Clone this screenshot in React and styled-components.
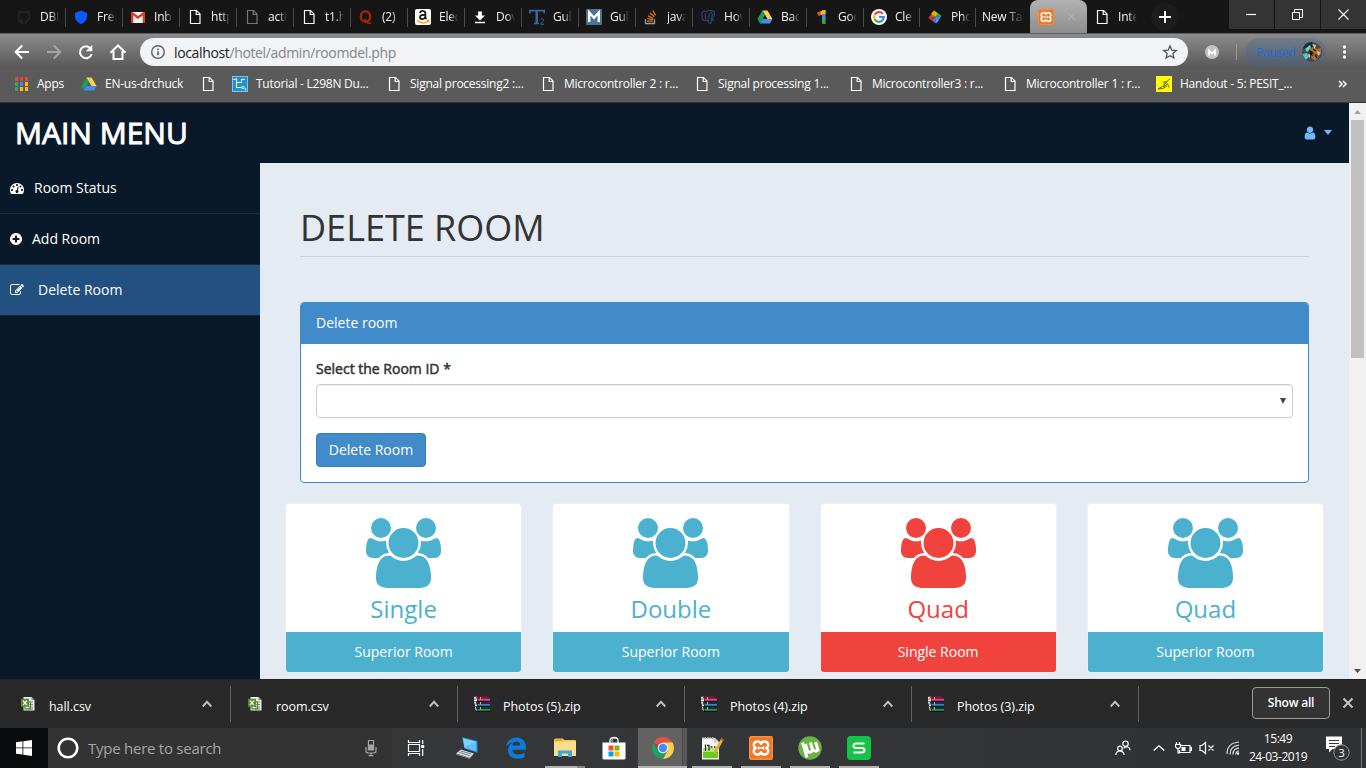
import React from "react";
import styled, { createGlobalStyle, css } from "styled-components";

const GlobalStyle = createGlobalStyle`
  *, *::before, *::after { box-sizing: border-box; }
  html, body { margin: 0; padding: 0; }
  body { width: 1366px; height: 768px; overflow: hidden; font-family: "Open Sans", sans-serif; background: #09192a; }
  svg { display: block; flex: none; }
`;

const Screen = styled.div`
  width: 1366px;
  height: 768px;
  display: flex;
  flex-direction: column;
  overflow: hidden;
`;

/* ---------- browser tabs ---------- */

const TabStrip = styled.div`
  height: 33px;
  flex: none;
  display: flex;
  background: #161616;
  padding-left: 9px;
`;

const TabBox = styled.div`
  width: ${(p) => p.$width}px;
  height: 33px;
  flex: none;
  display: flex;
  align-items: center;
  padding-left: ${(p) => p.$pad}px;
  overflow: hidden;
  background: linear-gradient(to right, transparent calc(100% - 1px), #4b4b4b 0) 0 8px / 100% 19px no-repeat;
  ${(p) => p.$plain && css`background: none;`}
  ${(p) =>
    p.$active &&
    css`
      background: linear-gradient(#b2b2b2, #8d8d8d);
      border-radius: 8px 8px 0 0;
      justify-content: space-between;
      padding-right: 11px;
    `}
`;

const TabLabel = styled.span`
  width: ${(p) => p.$width || 19}px;
  margin-left: ${(p) => p.$gap ?? 8}px;
  overflow: hidden;
  white-space: nowrap;
  font-size: 12px;
  line-height: 18px;
  letter-spacing: -0.2px;
  color: #f2f2f2;
  mask-image: linear-gradient(to right, #000 55%, transparent 100%);
`;

const NewTabButton = styled.div`
  width: 28px;
  height: 28px;
  margin: 3px 0 0 7px;
  border-radius: 50%;
  background: #1c1c1c;
  display: grid;
  place-items: center;
`;

const WindowControls = styled.div`
  margin-left: auto;
  display: flex;
  gap: 1px;
  height: 29px;
`;

const ControlButton = styled.div`
  width: 45px;
  height: 29px;
  padding-right: 1px;
  background: #343434;
  display: grid;
  place-items: center;
`;

/* ---------- toolbar ---------- */

const BrowserHead = styled.div`
  height: 70px;
  flex: none;
  background: linear-gradient(#8b8b8b 0, #5a5a5a 33px);
  border-top: 1px solid #5e5e5e;
  border-bottom: 1px solid #343434;
`;

const Toolbar = styled.div`
  height: 36px;
  display: flex;
  align-items: center;
  padding-left: 12px;
`;

const NavButton = styled.div`
  width: 32px;
  height: 20px;
  flex: none;
`;

const AddressBar = styled.div`
  width: 1048px;
  height: 28px;
  border-radius: 14px;
  background: #f1f3f4;
  display: flex;
  align-items: center;
  padding: 0 10px;
  font-size: 14px;
  letter-spacing: -0.36px;
  color: #80868b;
`;

const Host = styled.span`
  color: #202124;
  margin-left: 8px;
`;

const UrlPath = styled.span`
  flex: 1;
`;

const ExtensionBadge = styled.div`
  width: 14px;
  height: 14px;
  margin-left: 17px;
  border-radius: 50%;
  background: #c3c3c3;
  display: grid;
  place-items: center;
`;

const ToolbarDivider = styled.div`
  width: 1px;
  height: 16px;
  margin-left: 17px;
  background: #999;
`;

const ProfilePill = styled.div`
  width: 80px;
  height: 28px;
  margin-left: 9px;
  border-radius: 14px;
  background: rgba(66, 104, 150, 0.32);
  display: flex;
  align-items: center;
  justify-content: space-between;
  padding: 0 4px 0 10px;
  font-size: 12px;
  letter-spacing: -0.35px;
  color: #1a6be0;
`;

const BookmarkBar = styled.div`
  height: 28px;
  display: flex;
  align-items: center;
  padding-left: 13px;
`;

const BookmarkItem = styled.div`
  width: ${(p) => p.$width}px;
  flex: none;
  display: flex;
  align-items: center;
  gap: 8px;
  white-space: nowrap;
  font-size: 12px;
  line-height: 16px;
  letter-spacing: -0.24px;
  color: #fff;
`;

const IconBox = styled.span`
  width: 16px;
  height: 16px;
  flex: none;
  display: grid;
  place-items: center;
`;

/* ---------- web page ---------- */

const Viewport = styled.div`
  height: 576px;
  flex: none;
  display: flex;
`;

const Page = styled.div`
  width: 1349px;
  height: 576px;
  overflow: hidden;
  background: #09192a;
`;

const TopNav = styled.header`
  height: 60px;
  display: flex;
  align-items: center;
  justify-content: space-between;
  padding: 0 17px 0 15px;
`;

const Brand = styled.div`
  margin-top: -1px;
  font-size: 30px;
  letter-spacing: 0;
  color: #fff;
  -webkit-text-stroke: 1px #fff;
`;

const UserMenu = styled.div`
  display: flex;
  align-items: center;
  gap: 8px;
  margin-top: -2px;
  color: #6fbafc;
`;

const Caret = styled.span`
  border: 4.500px solid transparent;
  border-top-color: currentColor;
  border-top-width: 5px;
  border-bottom: 0;
`;

const PageBody = styled.div`
  display: flex;
`;

const SideMenu = styled.nav`
  width: 260px;
  flex: none;
`;

const MenuItem = styled.div`
  height: 51px;
  display: flex;
  align-items: center;
  gap: ${(p) => p.$gap}px;
  padding: 0 10px 1px;
  border-bottom: 1px solid #1a2a3b;
  background: ${(p) => (p.$active ? "#225081" : "transparent")};
  color: #fff;
  font-size: 14px;
`;

const Content = styled.main`
  width: 1089px;
  height: 516px;
  overflow: hidden;
  background: #e4ebf3;
  padding: 0 40px;
`;

const PageTitle = styled.h1`
  margin: 0 0 45px;
  height: 94px;
  padding-top: 40px;
  border-bottom: 1px solid #c8d1df;
  font-size: 36px;
  font-weight: 400;
  line-height: 50px;
  letter-spacing: 0;
  color: #333;
`;

const Panel = styled.section`
  height: 181px;
  border: 1px solid #428bca;
  border-radius: 4px;
  background: #fff;
  overflow: hidden;
`;

const PanelHeading = styled.div`
  height: 41px;
  padding-left: 15px;
  background: #428bca;
  color: #fff;
  font-size: 14px;
  line-height: 40px;
`;

const PanelBody = styled.div`
  padding: 15px;
`;

const FieldLabel = styled.div`
  height: 25px;
  font-size: 14px;
  line-height: 20px;
  color: #333;
  -webkit-text-stroke: 0.5px #333;
`;

const SelectField = styled.div`
  height: 34px;
  border: 1px solid #ccc;
  border-radius: 4px;
  box-shadow: inset 0 1px 1px rgba(0, 0, 0, 0.075);
  display: flex;
  align-items: center;
  justify-content: flex-end;
  padding-right: 6px;
`;

const DeleteButton = styled.div`
  width: 110px;
  height: 34px;
  margin-top: 15px;
  border: 1px solid #357ebd;
  border-radius: 4px;
  background: #428bca;
  color: #fff;
  font-size: 14px;
  line-height: 32px;
  text-align: center;
`;

const CardGrid = styled.div`
  display: grid;
  grid-template-columns: repeat(4, 1fr);
  gap: 30px;
  margin: 20px -15px 0;
`;

const Card = styled.article`
  height: 170px;
  border: 1px solid #eceef1;
  border-radius: 4px;
  background: #fff;
  color: ${(p) => p.$color};
  overflow: hidden;
  text-align: center;
`;

const CardTop = styled.div`
  height: 128px;
  padding-top: 14px;
  display: flex;
  flex-direction: column;
  align-items: center;
`;

const CardTitle = styled.div`
  margin-top: 5px;
  font-size: 24px;
  font-weight: 400;
  line-height: 32px;
`;

const CardFooter = styled.div`
  height: 40px;
  background: ${(p) => p.$color};
  color: #fff;
  font-size: 14px;
  line-height: 40px;
`;

const Scrollbar = styled.div`
  width: 17px;
  background: #f1f1f1;
  display: flex;
  flex-direction: column;
  align-items: center;
  justify-content: space-between;
`;

const ScrollTrack = styled.div`
  width: 13px;
  flex: 1;
`;

const ScrollThumb = styled.div`
  height: 238px;
  background: #c1c1c1;
`;

const ScrollArrow = styled.div`
  height: 17px;
  display: grid;
  place-items: center;
`;

/* ---------- downloads shelf ---------- */

const Shelf = styled.div`
  height: 49px;
  flex: none;
  background: #292929;
  border-top: 1px solid #202224;
  display: flex;
  align-items: center;
  padding: 0 12px 0 4px;
`;

const DownloadItem = styled.div`
  width: 227px;
  height: 36px;
  flex: none;
  display: flex;
  align-items: center;
  padding: 0 18px 0 16px;
  border-right: 1px solid #5f5f5f;
  color: #fff;
`;

const FileName = styled.span`
  flex: 1;
  margin: 4px 0 0 13px;
  font-size: 12.500px;
  letter-spacing: -0.05px;
`;

const ShowAll = styled.div`
  width: 78px;
  height: 32px;
  margin: -2px 0 0 auto;
  border: 1px solid #9a9a9a;
  border-radius: 4px;
  background: #333;
  color: #fff;
  font-size: 12px;
  font-weight: 600;
  letter-spacing: -0.2px;
  line-height: 29px;
  text-align: center;
`;

const ShelfClose = styled.div`
  margin: -2px 0 0 12px;
`;

/* ---------- taskbar ---------- */

const Taskbar = styled.div`
  height: 40px;
  flex: none;
  display: flex;
  background: linear-gradient(to right, #383838, #343537 55%, #2f3133);
`;

const StartButton = styled.div`
  width: 48px;
  background: #090b0c;
  display: grid;
  place-items: center;
`;

const SearchBox = styled.div`
  width: 344px;
  background: #333;
  display: flex;
  align-items: center;
  padding: 0 13px 0 9px;
  color: #a6a6a6;
  font-size: 15px;
  letter-spacing: -0.25px;
`;

const SearchHint = styled.span`
  flex: 1;
  margin-left: 9px;
`;

const TaskView = styled.div`
  width: 50px;
  padding-left: 15px;
  display: flex;
  align-items: center;
`;

const AppSlot = styled.div`
  width: 49px;
  height: 40px;
  flex: none;
  display: flex;
  flex-direction: column;
  align-items: center;
  background: ${(p) => (p.$active ? "linear-gradient(to right, #626262 44px, #454545 44px, #454545 45px, #585858 45px)" : "none")};
`;

const AppIcon = styled.div`
  height: 38px;
  display: grid;
  place-items: center;
  padding: 2px 0 0 1px;
`;

const RunningBar = styled.div`
  width: ${(p) => p.$width}px;
  height: 2px;
  background: ${(p) => (p.$stack ? "linear-gradient(to right, #b2b2b2 32px, #888 32px)" : "#b2b2b2")};
`;

const Tray = styled.div`
  margin-left: auto;
  display: flex;
  align-items: center;
`;

const TrayIcon = styled.div`
  margin-left: ${(p) => p.$gap}px;
`;

const Clock = styled.div`
  width: 66px;
  margin-left: 5px;
  color: #fff;
  font-size: 12px;
  line-height: 18px;
  letter-spacing: -0.45px;
  text-align: center;
`;

const DesktopEdge = styled.div`
  width: 5px;
  height: 40px;
  margin-left: 10px;
  border-left: 1px solid #777;
`;

/* ---------- icons ---------- */

const DocIcon = ({ color = "#fff" }) => (
  <svg width="16" height="16" viewBox="0 0 16 16" fill="none" stroke={color} strokeWidth="1.200">
    <path d="M3.500 1.500h6l3.500 3.500v9.500h-9.500z" />
    <path d="M9.200 1.500v4H13" />
  </svg>
);

const DriveIcon = () => (
  <svg width="16" height="16" viewBox="0 0 16 16">
    <path d="M5.500 1.500 8 6 3 14.500.5 10z" fill="#18a05e" />
    <path d="M5.500 1.500h5l5 8.500h-5z" fill="#ffcf48" />
    <path d="M5.600 10h10L13 14.500H3z" fill="#4688f4" />
  </svg>
);

const XamppIcon = ({ size = 16 }) => (
  <svg width={size} height={size} viewBox="0 0 16 16">
    <rect width="16" height="16" rx="1.500" fill="#f37623" />
    <rect x=".5" y=".5" width="15" height="15" rx="1" fill="none" stroke="#fa9b58" strokeWidth=".6" />
    <path
      d="M8 5.200C7.400 3.600 5.800 3.600 4.800 3.800 3.200 4.200 3 5.800 3.400 6.800 3.700 7.500 4.200 7.800 4.500 8 4.200 8.200 3.700 8.500 3.400 9.200 3 10.200 3.200 11.800 4.800 12.200 5.800 12.400 7.400 12.400 8 10.800 8.600 12.400 10.200 12.400 11.200 12.200 12.800 11.800 13 10.200 12.600 9.200 12.300 8.500 11.800 8.200 11.500 8 11.800 7.800 12.300 7.500 12.600 6.800 13 5.800 12.800 4.200 11.200 3.800 10.200 3.600 8.600 3.600 8 5.200z"
      fill="none"
      stroke="#fff"
      strokeWidth="1.700"
      strokeLinejoin="round"
    />
    <path d="M6.300 6.800v2.400M9.700 6.800v2.400M6.300 8h3.400" fill="none" stroke="#fff" strokeWidth=".9" />
  </svg>
);

const TabIcons = {
  github: (
    <svg width="16" height="16" viewBox="0 0 16 16" fill="none" stroke="#252525" strokeWidth="1.600">
      <path d="M6 15v-3C2 11 1.500 6.500 3.500 5L3.300 2.200 6 3.200h4l2.700-1-.2 2.800c2 1.500 1.500 6-2.500 7v3M6 13c-2 .5-2.500-1-4-1.500" />
    </svg>
  ),
  shield: (
    <svg width="16" height="16" viewBox="0 0 16 16">
      <path d="M8 1.500 14 4v3.500c0 3.500-2.600 6-6 7.500-3.400-1.500-6-4-6-7.500V4z" fill="#0a5bff" />
    </svg>
  ),
  gmail: (
    <svg width="16" height="16" viewBox="0 0 16 16">
      <path d="M1 3h14v11H1z" fill="#f2f2f2" />
      <path d="M1 3v11h2.300V6.500L8 10l4.700-3.500V14H15V3h-1.500L8 7 2.500 3z" fill="#d9392e" />
    </svg>
  ),
  quora: (
    <svg width="16" height="16" viewBox="0 0 16 16" fill="none" stroke="#a82400">
      <ellipse cx="7.500" cy="7.500" rx="4.700" ry="5.200" strokeWidth="2.300" />
      <path d="M6 10.500c2.800-.5 3 4.300 5 4 1.200 0 1.500-.8 1.600-1.600" strokeWidth="1.700" />
    </svg>
  ),
  amazon: (
    <svg width="16" height="16" viewBox="0 0 16 16">
      <rect width="16" height="16" rx="2" fill="#fff" />
      <path d="M5 4.200c.4-3 5.400-3 5.400.2v4.400l1 1.200M10.300 5.600C6.500 5.600 5 6.400 5 8.200c0 2.400 4 2.700 5.300-.2" fill="none" stroke="#111" strokeWidth="1.700" />
      <path d="M2 11.500c4 3 8.500 3 11.500.4M11.500 11.300l2.300-.1-.5 2.300" fill="none" stroke="#f90" strokeWidth="1.200" />
    </svg>
  ),
  download: (
    <svg width="16" height="16" viewBox="0 0 16 16" fill="#fff">
      <path d="M6 2.500h4v4h3L8 11.500 3 6.500h3zM3 12.700h10v1.500H3z" />
    </svg>
  ),
  tutorials: (
    <svg width="16" height="16" viewBox="0 0 16 16" fill="none" stroke="#336ba3">
      <path d="M.8 4.500V1.700h14.400v2.800M5 14.500h5" strokeWidth="1.700" />
      <path d="M7.700 2v12.500" strokeWidth="2.400" />
      <path d="M11.700 10.500c1-1.300 3-.7 3 .7s-3 2.500-3 4h3.500" strokeWidth="1" />
    </svg>
  ),
  mdn: (
    <svg width="16" height="16" viewBox="0 0 16 16">
      <rect width="16" height="16" rx="1" fill="#4f7193" />
      <path d="M3.200 13V3.500L8 8.800l4.800-5.300V13" fill="none" stroke="#fff" strokeWidth="2.400" />
    </svg>
  ),
  stack: (
    <svg width="16" height="16" viewBox="0 0 16 16" fill="none" strokeWidth="1.300">
      <path d="M2.500 10v4.500h9V10" stroke="#9a9a9a" />
      <path d="M4.200 12.200h5.600M4.300 9.700l5.600 1M5 6.900l5.200 2.400M7 4l4.400 3.700M9.700 1.500l3 4.800" stroke="#e3711e" />
    </svg>
  ),
  postgres: (
    <svg width="16" height="16" viewBox="0 0 16 16" fill="none" stroke="#2c466e" strokeWidth="1.200">
      <path d="M4.700 11.500C2.500 12.500 1 5.500 2.300 3.200c1-1.600 3.300-1.700 4.700-.7M6 4c-1.500 2 0 4-.5 6s1.500 2 2.500.8M7 2.500c2.500-1.800 7.500-1 7.500 2S12 9.500 11.200 11M8.200 10.500c.3 2 .3 4 1.700 4s1.600-1.800 1.300-3.700M9 4c0 3 .5 4-.6 6M10.500 3.500c1.500 0 2 1.500 1.500 3.500s-1 3-.3 3.800M11 11.200h3.200" />
    </svg>
  ),
  one: (
    <svg width="16" height="16" viewBox="0 0 16 16">
      <path d="M3.500 3.500 9 1.500h2.500V6H8L4.500 6.500z" fill="#fbbc04" />
      <path d="M3 4.200 6 2.600 7.200 5.500 4.800 6.700z" fill="#ea4335" />
      <path d="M8 5h3.500v5H8z" fill="#4285f4" />
      <path d="M8 9h3.500v6H9L8 14z" fill="#34a853" />
      <path d="m8 1.500 3.500-.5v3L8 5z" fill="#fbbc04" />
    </svg>
  ),
  google: (
    <svg width="16" height="16" viewBox="0 0 16 16">
      <circle cx="8" cy="8" r="8" fill="#fff" />
      <g fill="none" strokeWidth="2.200">
        <path d="M11.800 4.700A4.900 4.900 0 0 0 3.800 5.600" stroke="#ea4335" />
        <path d="M3.700 5.600a4.900 4.900 0 0 0 0 4.800" stroke="#fbbc05" />
        <path d="M3.700 10.300a4.900 4.900 0 0 0 7.500 1.300" stroke="#34a853" />
        <path d="M11.200 11.600A4.900 4.900 0 0 0 12.800 8H8.200" stroke="#4285f4" />
      </g>
    </svg>
  ),
  photos: (
    <svg width="14" height="14" viewBox="0 0 14 14">
      <path d="M7 7 5.800.3 10 3.500z" fill="#fbbc04" />
      <path d="M7 7 3 4 6 .5z" fill="#f4b400" />
      <path d="M7 7l6.700-1.200L10.500 10z" fill="#4285f4" />
      <path d="M7 7l3-4 3.500 3z" fill="#34a853" />
      <path d="M7 7l1.200 6.700L4 10.500z" fill="#3b78e7" />
      <path d="M7 7l4 3-3 3.500z" fill="#5c9cf5" />
      <path d="M7 7 .3 8.200 3.500 4z" fill="#ea4335" />
      <path d="M7 7l-3 4L.5 8z" fill="#c53929" />
    </svg>
  ),
};

const ArrowIcon = ({ flip, color }) => (
  <svg width="20" height="20" viewBox="0 0 20 20" fill="none" stroke={color} strokeWidth="2" transform={flip ? "scale(-1 1)" : undefined}>
    <path d="M17 10H4M10.200 3.500 3.700 10l6.500 6.500" />
  </svg>
);

const ReloadIcon = () => (
  <svg width="20" height="20" viewBox="0 0 20 20">
    <path d="M14.600 6.300A6 6 0 1 0 15.700 12" fill="none" stroke="#fff" strokeWidth="2" />
    <path d="M16.300 2.800v6.500H9.800z" fill="#fff" />
  </svg>
);

const HomeIcon = () => (
  <svg width="20" height="20" viewBox="0 0 20 20" fill="none" stroke="#fff" strokeWidth="2">
    <path d="M2.500 10.800 10 3.500l7.500 7.300M5.500 9v8h9V9" />
  </svg>
);

const GlyphIcon = ({ box, width, height, d }) => (
  <svg width={width} height={height} viewBox={box} fill="currentColor">
    <path d={d} />
  </svg>
);

const glyphs = {
  gauge: "M384 1152q0-53-37.500-90.500T256 1024t-90.500 37.500T128 1152t37.500 90.500T256 1280t90.500-37.500T384 1152zm192-448q0-53-37.500-90.500T448 576t-90.500 37.500T320 704t37.500 90.500T448 832t90.500-37.500T576 704zm428 481l101-382q6-26-7.500-48.500T1059 725t-48 6.500-30 39.500l-101 382q-60 5-107 43.500t-63 98.500q-20 77 20 146t117 89 146-20 89-117q16-60-6-117t-72-91zm660-33q0-53-37.500-90.500T1536 1024t-90.500 37.500T1408 1152t37.500 90.500T1536 1280t90.500-37.500T1664 1152zm-640-640q0-53-37.500-90.500T896 384t-90.500 37.500T768 512t37.500 90.500T896 640t90.500-37.500T1024 512zm448 192q0-53-37.500-90.500T1344 576t-90.500 37.500T1216 704t37.500 90.500T1344 832t90.500-37.500T1472 704zm320 448q0 261-141 483-19 29-54 29H195q-35 0-54-29Q0 1414 0 1152q0-182 71-348t191-286 286-191 348-71 348 71 286 191 191 286 71 348z",
  plus: "M1216 960V832q0-26-19-45t-45-19H896V512q0-26-19-45t-45-19H704q-26 0-45 19t-19 45v256H384q-26 0-45 19t-19 45v128q0 26 19 45t45 19h256v256q0 26 19 45t45 19h128q26 0 45-19t19-45v-256h256q26 0 45-19t19-45zm320-64q0 209-103 385.500T1153.500 1561 768 1664t-385.500-103T103 1281.500 0 896t103-385.500T382.500 231 768 128t385.500 103T1433 510.500 1536 896z",
  edit: "M888 1184l116-116-152-152-116 116v56h96v96h56zm440-720q-16-16-33 1L945 815q-17 17-1 33t33-1l350-350q17-17 1-33zm80 594v190q0 119-84.500 203.500T1120 1536H288q-119 0-203.500-84.500T0 1248V416q0-119 84.500-203.500T288 128h832q63 0 117 25 15 7 18 23 3 17-9 29l-49 49q-14 14-32 8-23-6-45-6H288q-66 0-113 47t-47 113v832q0 66 47 113t113 47h832q66 0 113-47t47-113v-126q0-13 9-22l64-64q15-15 35-7t20 29zm-96-738l288 288-672 672H640V992zm444 132l-92 92-288-288 92-92q28-28 68-28t68 28l152 152q28 28 28 68t-28 68z",
  user: "M1280 1399q0 109-62.500 187t-150.500 78H213q-88 0-150.500-78T0 1399q0-85 8.500-160.500t31.500-152 58.500-131 94-89T327 832q131 128 313 128t313-128q76 0 134.500 34.500t94 89 58.500 131 31.500 152 8.500 160.500zm-256-887q0 159-112.500 271.500T640 896 368.500 783.500 256 512t112.500-271.500T640 128t271.500 112.500T1024 512z",
  users: "M593 896q-162 5-265 128H194q-82 0-138-40.500T0 865q0-353 124-353 6 0 43.500 21t97.500 42.500T384 597q67 0 133-23-5 37-5 66 0 139 81 256zm1071 637q0 120-73 189.500t-194 69.500H523q-121 0-194-69.500T256 1533q0-53 3.500-103.500t14-109T300 1212t43-97.500 62-81 85.500-53.500T602 960q10 0 43 21.500t73 48 107 48 135 21.500 135-21.500 107-48 73-48 43-21.500q61 0 111.500 20t85.500 53.500 62 81 43 97.500 26.500 108.500 14 109 3.500 103.500zM640 256q0 106-75 181t-181 75-181-75-75-181 75-181T384 0t181 75 75 181zm704 384q0 159-112.500 271.500T960 1024 688.500 911.500 576 640t112.500-271.500T960 256t271.500 112.500T1344 640zm576 225q0 78-56 118.500t-138 40.500h-134q-103-123-265-128 81-117 81-256 0-29-5-66 66 23 133 23 59 0 119-21.500t97.500-42.500 43.500-21q124 0 124 353zm-128-609q0 106-75 181t-181 75-181-75-75-181 75-181 181-75 181 75 75 181z",
};

const ExcelIcon = () => (
  <svg width="16" height="16" viewBox="0 0 16 16">
    <path d="M3.500 1h8l3 3v10.500h-11z" fill="#e9e9e9" />
    <path d="M11.500 1v3h3z" fill="#8a8a8a" />
    <path d="M8 6h5M8 8.500h5M8 11h5M8 13h5" stroke="#888" strokeWidth="1" />
    <path d="M5 11v1.800h5.500V6H9" fill="none" stroke="#4f8f32" strokeWidth="1.200" />
    <rect x="1" y="2.800" width="8" height="8" fill="#4f8f32" />
    <path d="m3 4.600 4 4.500M7 4.600 3 9.100" stroke="#fff" strokeWidth="1.400" />
  </svg>
);

const RarIcon = () => (
  <svg width="16" height="16" viewBox="0 0 16 16">
    <path d="m0 1 2.500-.5.5 4.500-1 1 1 4-1 1 1 4-2-1.500V9L0 6z" fill="#eee" />
    <path d="M0 3h2M0 5.500h2.500M.5 8h2M.5 10.500h2.500M1 13h2" stroke="#555" strokeWidth=".8" />
    <path d="M2 .5 13 .5l3 2v3H4z" fill="#8c1245" />
    <path d="M3.500 3.300H16v1.300H4z" fill="#e268ac" />
    <path d="m2 5.800 11.500 0 2.500 1.700v2.700H4z" fill="#10305c" />
    <path d="M3.500 8.200H16v1.200H4z" fill="#4d9be0" />
    <path d="m2 10.700 11.500 0 2.500 1.700v3H4z" fill="#0a3829" />
    <path d="M3.500 13.200H16v1.200H4z" fill="#35b080" />
    <path d="M3 5.400h13M3 10.500h13M3 15.500h13" stroke="#0c0c0c" strokeWidth=".8" />
    <path d="M6.500 1v2.500M6.500 6v2.500M6.500 11v2.500" stroke="#d6c226" strokeWidth="1" />
  </svg>
);

const ChevronUp = ({ color = "#bdbdbd", width = 10 }) => (
  <svg width={width} height="8" viewBox={`0 0 ${width} 8`} fill="none" stroke={color} strokeWidth={width > 10 ? 1.300 : 2}>
    <path d={`M.7 6.500 ${width / 2} 1.800 ${width - 0.7} 6.500`} />
  </svg>
);

const AvatarIcon = () => (
  <svg width="20" height="20" viewBox="0 0 20 20">
    <circle cx="10" cy="10" r="10" fill="#4b4a3c" />
    <path d="M1 6a10 10 0 0 1 9-6l2 4-5 4z" fill="#1e2b38" />
    <path d="m3 7 5-4 1 3-4 4z" fill="#5ed6df" />
    <path d="M.5 12 5 11l2 4-3 2.800Q1.500 15.500.5 12z" fill="#49c7d8" />
    <path d="m7 8 4-3 4 2 4-1v4l-4 2-5 1zM9 15l3-2 5 2-4 4z" fill="#a9702f" />
    <path d="m10 2 4 1-1 4zM15 9l4 2-3 3zM6 12l3 1-2 3z" fill="#d7c7a8" />
    <path d="m8 9 3 2-2 2zM13 13l2 3M11 7l3 2" stroke="#1b1a17" strokeWidth="1.300" />
  </svg>
);

const LaptopIcon = () => (
  <svg width="26" height="26" viewBox="0 0 26 26">
    <path d="m8 2 15.500 4v12l-13-4.500z" fill="#1683c9" />
    <path d="m9 3.200 13.500 3.500v9.800L10.500 13z" fill="#5dc0f6" />
    <path d="m9 3.200 13.500 3.500L10.500 12z" fill="#7dd1fb" />
    <path d="m7 14.500 13 4-4 4.500-14-4.500z" fill="#cfd6da" />
    <path d="m7 16 10 3M5.500 17.500l10 3" stroke="#7b868d" strokeWidth=".9" />
    <path d="m2 18.500 14 4.500v1L2 19.500z" fill="#8e989d" />
  </svg>
);

const EdgeIcon = () => (
  <svg width="22" height="22" viewBox="0 0 22 22">
    <path d="M1 10C2 3.500 6.500.5 11.500.5 17.500.5 21 5 21 10v2.700H7.300c.2 3.300 3 4.800 6 4.800 2.500 0 4.500-.7 6.200-1.700v4.300c-2 1-4.300 1.500-7 1.500C6.500 21.600 3 18 3 13.300c0-3.500 2-6.500 5.300-8C5.500 5.800 2.500 7.500 1 10zm6.400-1.400h7.800c0-2.800-1.500-4-3.700-4-2.300 0-3.800 1.600-4.100 4z" fill="#0b7bdc" />
  </svg>
);

const ExplorerIcon = () => (
  <svg width="24" height="22" viewBox="0 0 24 22">
    <path d="M1 3q0-1.500 1.500-1.500h7L11.500 3H22q1 0 1 1v15H1z" fill="#f2c64f" />
    <path d="M2 2.500h7v1.500H2z" fill="#e0a62c" />
    <path d="M1 4.500h22V19H1z" fill="#fbdf8c" />
    <path d="M5 20v-6.500h14V20h-4v-3.500H9V20z" fill="#3aa7df" />
  </svg>
);

const StoreIcon = () => (
  <svg width="24" height="24" viewBox="0 0 24 24">
    <path d="M8 7V4.500Q8 1.500 12 1.500T16 4.500V7" fill="none" stroke="#fff" strokeWidth="1.300" />
    <path d="M10 6V4q0-3 4-2" fill="none" stroke="#ddd" strokeWidth="1" />
    <path d="M.5 6.500h23V22q0 1.500-1.500 1.500H2Q.5 23.500.5 22z" fill="#fff" />
    <path d="M6.500 9.500h5v5h-5z" fill="#f25022" />
    <path d="M12.500 9.500h5v5h-5z" fill="#7fba00" />
    <path d="M6.500 15.500h5v5h-5z" fill="#00a4ef" />
    <path d="M12.500 15.500h5v5h-5z" fill="#ffb900" />
  </svg>
);

const ChromeIcon = () => (
  <svg width="22" height="22" viewBox="0 0 22 22">
    <path d="M11 11 1.500 5.500A11 11 0 0 1 20.500 5.500z" fill="#de5347" />
    <path d="M1.500 5.500A11 11 0 0 0 11 22l4.800-8.300L11 11 6.200 13.700z" fill="#1ea261" />
    <path d="M11 5.500h9.500A11 11 0 0 1 11 22l4.800-8.300z" fill="#fdd04c" />
    <circle cx="11" cy="11" r="5.300" fill="#f4f4f4" />
    <circle cx="11" cy="11" r="4.200" fill="#4a8af4" />
  </svg>
);

const NotepadIcon = () => (
  <svg width="24" height="24" viewBox="0 0 24 24">
    <path d="M2 2h13l4 4v17.500H2z" fill="#f5f7f0" />
    <path d="M3 12h15v5H3z" fill="#b5e682" />
    <path d="M3 16h15v6H3z" fill="#68cc1d" />
    <path d="M2 2h12" stroke="#aaa" strokeWidth="2" strokeDasharray="1.500 1" />
    <path d="M14 2v4.500h5" fill="#ccc" />
    <path d="M5.500 8.500v6.500M7 9.500h2v5M10.500 11h2M14 11h1.500" fill="none" stroke="#263018" strokeWidth="1.300" />
    <path d="M21.500 2 14.300 14l-.8 4.500 3.700-3L23.700 3.500z" fill="#e4ad36" />
    <path d="m20.700 3.500 2 1.300.9-1.800-1.900-1z" fill="#c83a31" />
  </svg>
);

const TorrentIcon = () => (
  <svg width="24" height="24" viewBox="0 0 24 24">
    <circle cx="12" cy="12" r="11.700" fill="#68b345" />
    <path d="M4.500 6.500 9 21.500M7.300 8l2 6.500c.8 2.600 5.800 2 5-1.500L12.500 6.500M14 12c1 3 4 4 6 2L17.500 6" fill="none" stroke="#fff" strokeWidth="3" />
  </svg>
);

const WpsIcon = () => (
  <svg width="24" height="24" viewBox="0 0 24 24">
    <rect width="24" height="24" rx="4" fill="#16c445" />
    <path d="M17.500 7.500h-8Q6.500 7.500 6.500 9.700T9.500 12h5q3 0 3 2.300T14.500 16.500h-8" fill="none" stroke="#fff" strokeWidth="2" />
  </svg>
);

const line = { fill: "none", stroke: "#fff", strokeWidth: 1.2 };

/* ---------- data ---------- */

const tabs = [
  ["DBI", TabIcons.github],
  ["Free", TabIcons.shield],
  ["Inb", TabIcons.gmail],
  ["http", <DocIcon />],
  ["acti", <DocIcon color="#777" />],
  ["t1.h", <DocIcon />],
  ["(2)", TabIcons.quora],
  ["Elec", TabIcons.amazon],
  ["Dov", TabIcons.download],
  ["Gul", TabIcons.tutorials],
  ["Gul", TabIcons.mdn],
  ["java", TabIcons.stack],
  ["Hov", TabIcons.postgres],
  ["Bac", <DriveIcon />],
  ["Goo", TabIcons.one],
  ["Cle", TabIcons.google],
  ["Pho", TabIcons.photos],
];

const AppsIcon = () => (
  <svg width="16" height="16" viewBox="0 0 16 16">
    {["#ea4335", "#ea4335", "#ea4335", "#34a853", "#4285f4", "#fbbc05", "#34a853", "#fbbc05", "#fbbc05"].map((c, i) => (
      <rect key={i} x={2 + (i % 3) * 5} y={1 + Math.floor(i / 3) * 5} width="3" height="4" fill={c} />
    ))}
  </svg>
);

const CircuitIcon = () => (
  <svg width="16" height="16" viewBox="0 0 16 16" fill="none" stroke="#fff">
    <rect x=".5" y=".5" width="15" height="15" fill="#1e93cf" stroke="#7cc5ea" />
    <path d="M1 3.500h3M4.500 2v9.500h5M4.500 6.500h4.500M9.500 3v4M9.500 3.500H13" />
    <circle cx="11" cy="11.500" r="1.200" />
    <path d="M13.500 12v2.500" />
  </svg>
);

const HandoutIcon = () => (
  <svg width="16" height="16" viewBox="0 0 16 16" fill="none" stroke="#6d6a00">
    <rect width="16" height="16" fill="#fdfc02" stroke="none" />
    <path d="m2 13 4.500-2.500L11 5.500 7 6.500M14 3l-4 3-3 5 4.500-3M2 13l5-.5 4-2.500M11.500 7.500l1.500 4" />
  </svg>
);

const bookmarks = [
  ["Apps", <AppsIcon />, 68],
  ["EN-us-drchuck", <DriveIcon />, 119],
  ["", <DocIcon />, 32],
  ["Tutorial - L298N Du...", <CircuitIcon />, 154],
  ["Signal processing2 :...", <DocIcon />, 154],
  ["Microcontroller 2 : r...", <DocIcon />, 154],
  ["Signal processing 1...", <DocIcon />, 154],
  ["Microcontroller3 : r...", <DocIcon />, 154],
  ["Microcontroller 1 : r...", <DocIcon />, 154],
  ["Handout - 5: PESIT_...", <HandoutIcon />, 182],
];

const TEAL = "#4cb1cf";
const RED = "#f0433d";

const rooms = [
  ["Single", "Superior Room", TEAL],
  ["Double", "Superior Room", TEAL],
  ["Quad", "Single Room", RED],
  ["Quad", "Superior Room", TEAL],
];

const downloads = [
  ["hall.csv", <ExcelIcon />],
  ["room.csv", <ExcelIcon />],
  ["Photos (5).zip", <RarIcon />],
  ["Photos (4).zip", <RarIcon />],
  ["Photos (3).zip", <RarIcon />],
];

const apps = [
  { icon: <LaptopIcon /> },
  { icon: <EdgeIcon /> },
  { icon: <ExplorerIcon />, bar: 40, stack: true },
  { icon: <StoreIcon /> },
  { icon: <ChromeIcon />, bar: 49, active: true },
  { icon: <NotepadIcon />, bar: 40 },
  { icon: <XamppIcon size={24} />, bar: 40 },
  { icon: <TorrentIcon />, bar: 40 },
  { icon: <WpsIcon />, bar: 40 },
];

/* ---------- sections ---------- */

const BrowserTabs = () => (
  <TabStrip>
    {tabs.map(([label, icon], i) => (
      <TabBox key={i} $width={i < 15 ? 57 : 56} $pad={7}>
        <IconBox>{icon}</IconBox>
        <TabLabel>{label}</TabLabel>
      </TabBox>
    ))}
    <TabBox $width={54} $pad={6} $plain>
      <TabLabel $width={42} $gap={0}>New Tab</TabLabel>
    </TabBox>
    <TabBox $width={57} $pad={8} $active>
      <XamppIcon />
      <svg width="9" height="9" viewBox="0 0 9 9" stroke="#adadad" strokeWidth="1.200">
        <path d="m1 1 7 7M8 1 1 8" />
      </svg>
    </TabBox>
    <TabBox $width={57} $pad={7} $plain>
      <IconBox><DocIcon /></IconBox>
      <TabLabel>Inte</TabLabel>
    </TabBox>
    <NewTabButton>
      <svg width="12" height="12" viewBox="0 0 12 12" stroke="#fff" strokeWidth="2">
        <path d="M6 0v12M0 6h12" />
      </svg>
    </NewTabButton>
    <WindowControls>
      <ControlButton>
        <svg width="10" height="10" viewBox="0 0 10 10" {...line}><path d="M0 4.500h10" /></svg>
      </ControlButton>
      <ControlButton>
        <svg width="11" height="11" viewBox="0 0 11 11" {...line} strokeWidth="1">
          <path d="M.5 3.500h7v7h-7zM2.500 3.500v-3h8v8h-3" />
        </svg>
      </ControlButton>
      <ControlButton>
        <svg width="11" height="11" viewBox="0 0 11 11" {...line}><path d="m.5.5 10 10M10.500.5l-10 10" /></svg>
      </ControlButton>
    </WindowControls>
  </TabStrip>
);

const BrowserToolbar = () => (
  <BrowserHead>
    <Toolbar>
      <NavButton><ArrowIcon color="#fff" /></NavButton>
      <NavButton><ArrowIcon color="#a5a5a5" flip /></NavButton>
      <NavButton><ReloadIcon /></NavButton>
      <NavButton><HomeIcon /></NavButton>
      <AddressBar>
        <svg width="16" height="16" viewBox="0 0 16 16" fill="none" stroke="#5f6368" strokeWidth="1.400">
          <circle cx="8" cy="8" r="6.300" />
          <path d="M8 7.200v4M8 4.500v1.500" strokeWidth="1.600" />
        </svg>
        <Host>localhost</Host>
        <UrlPath>/hotel/admin/roomdel.php</UrlPath>
        <svg width="16" height="16" viewBox="0 0 16 16" fill="none" stroke="#4e5256" strokeWidth="1.300">
          <path d="m8 2 1.800 4.200 4.500.4-3.400 3 1 4.400L8 11.700 4.100 14l1-4.400-3.400-3 4.500-.4z" />
        </svg>
      </AddressBar>
      <ExtensionBadge>
        <svg width="8" height="7" viewBox="0 0 8 7" fill="none" stroke="#fff" strokeWidth="1.700">
          <path d="M1 6.500V1.500L4 4.500l3-3v5" />
        </svg>
      </ExtensionBadge>
      <ToolbarDivider />
      <ProfilePill>
        Paused
        <AvatarIcon />
      </ProfilePill>
      <svg width="37" height="16" viewBox="0 0 37 16" fill="#fff">
        <circle cx="18.500" cy="3" r="1.700" />
        <circle cx="18.500" cy="8" r="1.700" />
        <circle cx="18.500" cy="13" r="1.700" />
      </svg>
    </Toolbar>
    <BookmarkBar>
      {bookmarks.map(([label, icon, width], i) => (
        <BookmarkItem key={i} $width={width}>
          <IconBox>{icon}</IconBox>
          {label}
        </BookmarkItem>
      ))}
      <svg width="10" height="8" viewBox="0 0 10 8" fill="none" stroke="#fff" strokeWidth="1.500">
        <path d="m1 1 3 3-3 3M5 1l3 3-3 3" />
      </svg>
    </BookmarkBar>
  </BrowserHead>
);

const HotelPage = () => (
  <Viewport>
    <Page>
      <TopNav>
        <Brand>MAIN MENU</Brand>
        <UserMenu>
          <GlyphIcon box="0 -64 1280 1792" width={12} height={15} d={glyphs.user} />
          <Caret />
        </UserMenu>
      </TopNav>
      <PageBody>
        <SideMenu>
          <MenuItem $gap={10}>
            <GlyphIcon box="0 0 1792 1792" width={14} height={14} d={glyphs.gauge} />
            Room Status
          </MenuItem>
          <MenuItem $gap={10}>
            <GlyphIcon box="0 0 1536 1792" width={12} height={14} d={glyphs.plus} />
            Add Room
          </MenuItem>
          <MenuItem $gap={14} $active>
            <GlyphIcon box="0 0 1792 1792" width={14} height={14} d={glyphs.edit} />
            Delete Room
          </MenuItem>
        </SideMenu>
        <Content>
          <PageTitle>DELETE ROOM</PageTitle>
          <Panel>
            <PanelHeading>Delete room</PanelHeading>
            <PanelBody>
              <FieldLabel>Select the Room ID *</FieldLabel>
              <SelectField>
                <svg width="6" height="6" viewBox="0 0 6 6" fill="#444"><path d="M0 0h6L3 6z" /></svg>
              </SelectField>
              <DeleteButton>Delete Room</DeleteButton>
            </PanelBody>
          </Panel>
          <CardGrid>
            {rooms.map(([bed, kind, color], i) => (
              <Card key={i} $color={color}>
                <CardTop>
                  <GlyphIcon box="0 0 1920 1792" width={75} height={70} d={glyphs.users} />
                  <CardTitle>{bed}</CardTitle>
                </CardTop>
                <CardFooter $color={color}>{kind}</CardFooter>
              </Card>
            ))}
          </CardGrid>
        </Content>
      </PageBody>
    </Page>
    <Scrollbar>
      <ScrollArrow>
        <svg width="7" height="4" viewBox="0 0 7 4" fill="#a3a3a3"><path d="M0 4 3.500 0 7 4z" /></svg>
      </ScrollArrow>
      <ScrollTrack><ScrollThumb /></ScrollTrack>
      <ScrollArrow>
        <svg width="7" height="4" viewBox="0 0 7 4" fill="#505050"><path d="M0 0h7L3.500 4z" /></svg>
      </ScrollArrow>
    </Scrollbar>
  </Viewport>
);

const DownloadShelf = () => (
  <Shelf>
    {downloads.map(([name, icon], i) => (
      <DownloadItem key={i}>
        {icon}
        <FileName>{name}</FileName>
        <ChevronUp />
      </DownloadItem>
    ))}
    <ShowAll>Show all</ShowAll>
    <ShelfClose>
      <svg width="12" height="12" viewBox="0 0 12 12" stroke="#c4c4c4" strokeWidth="2">
        <path d="m1.500 1.500 9 9M10.500 1.500l-9 9" />
      </svg>
    </ShelfClose>
  </Shelf>
);

const WindowsTaskbar = () => (
  <Taskbar>
    <StartButton>
      <svg width="16" height="16" viewBox="0 0 16 16" fill="#fff">
        <path d="m0 2.200 6.500-.9v6.200H0zM7.300 1.200 16 0v7.500H7.300zM0 8.300h6.500v6.300L0 13.800zM7.300 8.300H16V16l-8.700-1.200z" />
      </svg>
    </StartButton>
    <SearchBox>
      <svg width="22" height="22" viewBox="0 0 22 22" fill="none" stroke="#fff" strokeWidth="2.600">
        <circle cx="11" cy="11" r="9.300" />
      </svg>
      <SearchHint>Type here to search</SearchHint>
      <svg width="16" height="18" viewBox="0 0 16 18" fill="none" stroke="#a6a6a6" strokeWidth="1.200">
        <path d="M5.500 1.500h5v9h-5z" />
        <path d="M5.500 6h5v5h-5z" fill="#a6a6a6" />
        <path d="M3 8v4q0 2 2.500 2h5q2.500 0 2.500-2V8M8 14v2.500M5.500 16.700h5" />
      </svg>
    </SearchBox>
    <TaskView>
      <svg width="18" height="16" viewBox="0 0 18 16" {...line}>
        <path d="M1.500 0v2.500h11V0M1.500 16v-2.500h11V16M1.500 4.500h11v7h-11zM15.700 0v4M15.700 9v7" />
        <path d="M14.200 5h3v3h-3z" fill="#fff" stroke="none" />
      </svg>
    </TaskView>
    {apps.map((app, i) => (
      <AppSlot key={i} $active={app.active}>
        <AppIcon>{app.icon}</AppIcon>
        {app.bar && <RunningBar $width={app.bar} $stack={app.stack} />}
      </AppSlot>
    ))}
    <Tray>
      <svg width="16" height="16" viewBox="0 0 16 16" {...line}>
        <circle cx="10.500" cy="3.700" r="2.700" />
        <circle cx="5" cy="8.500" r="2.300" />
        <path d="M.8 15c.5-5.500 7.500-5.500 8.300 0M8.500 8.300c3-3 6.500-1 6.500 2" />
      </svg>
      <TrayIcon $gap={22}><ChevronUp color="#fff" width={12} /></TrayIcon>
      <TrayIcon $gap={10}>
        <svg width="17" height="13" viewBox="0 0 17 13" {...line}>
          <path d="M6 3.500h9v7H4.500V8M15 5.500h1.400v3H15M1.500 0v2.500M4.500 0v2.500M.5 2.500h5V5L4 6.500H2L.5 5zM3 6.500v4.500h2" />
          <path d="M6.500 5h4v4h-4z" fill="#fff" stroke="none" />
        </svg>
      </TrayIcon>
      <TrayIcon $gap={7}>
        <svg width="16" height="14" viewBox="0 0 16 14" {...line}>
          <path d="M1 4.500h2L6.500 1.500v11L3 9.500H1zM9.500 4.500l5 5M14.500 4.500l-5 5" />
        </svg>
      </TrayIcon>
      <TrayIcon $gap={11}>
        <svg width="14" height="14" viewBox="0 0 14 14" {...line} stroke="#ddd">
          <path d="M1 13Q1 2 13 1M4 13.500q0-8.500 9-9.300M7 13.500q0-6 6-6.300M9.800 13.500q0-3.300 3.200-3.500" />
          <circle cx="12" cy="12.500" r="1.200" fill="#fff" stroke="none" />
        </svg>
      </TrayIcon>
      <Clock>
        <div>15:49</div>
        <div>24-03-2019</div>
      </Clock>
      <TrayIcon $gap={14}>
        <svg width="26" height="26" viewBox="0 0 26 26">
          <path d="M1 1.500h16V14H7.500L4 17.500V14H1z" fill="#fff" />
          <path d="M4 5.500h10M4 8.500h10M4 11.500h6" stroke="#333" />
          <circle cx="16.500" cy="17.500" r="7.700" fill="#333" stroke="#999" />
          <text x="16.500" y="21.700" fill="#fff" fontSize="11.500" textAnchor="middle">3</text>
        </svg>
      </TrayIcon>
      <DesktopEdge />
    </Tray>
  </Taskbar>
);

export default function App() {
  return (
    <Screen>
      <GlobalStyle />
      <BrowserTabs />
      <BrowserToolbar />
      <HotelPage />
      <DownloadShelf />
      <WindowsTaskbar />
    </Screen>
  );
}
